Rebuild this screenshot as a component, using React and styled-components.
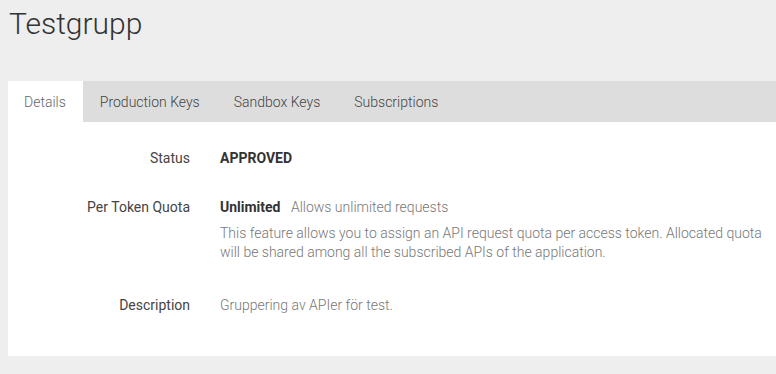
import React, { useState } from 'react'
import styled, { createGlobalStyle } from 'styled-components'

const GlobalStyle = createGlobalStyle`
    body {
        margin: 0;
        background: #eeeeee;
        font-family: Roboto, "Liberation Sans", sans-serif;
    }
`

const Page = styled.div`
    padding: 0 0 18px 8px;
`

const Title = styled.h1`
    margin: 0;
    padding: 6px 0 0 1px;
    height: 75px;
    font-size: 30px;
    font-weight: 300;
    color: #333;
    line-height: 36px;
`

const TabBar = styled.div`
    display: flex;
    height: 41px;
    background: #dddddd;
`

const Tab = styled.div`
    display: flex;
    align-items: center;
    padding: 0 17px;
    font-size: 14px;
    font-weight: 300;
    color: ${p => (p.$active ? '#666' : '#444')};
    background: ${p => (p.$active ? '#fff' : 'transparent')};
    cursor: pointer;

    &:first-child {
        padding-left: 16px;
    }
`

const Panel = styled.div`
    background: #fff;
    padding: 26px 0 12px;
    min-height: 234px;
    box-sizing: border-box;
`

const Row = styled.div`
    display: grid;
    grid-template-columns: 182px 1fr;
    column-gap: 30px;
    margin-bottom: 29px;
    font-size: 14px;
    line-height: 20px;
`

const Label = styled.div`
    text-align: right;
    color: #444;
`

const Value = styled.div`
    color: #777;
    font-weight: 300;
    padding-right: 10px;
`

const Strong = styled.span`
    font-weight: 700;
    color: #333;
    margin-right: 7px;
`

const Note = styled.p`
    margin: 7px 0 4px;
    line-height: 19px;
`

const tabs = ['Details', 'Production Keys', 'Sandbox Keys', 'Subscriptions']

export default function App() {
    const [active, setActive] = useState(0)

    return (
        <Page>
            <GlobalStyle />
            <Title>Testgrupp</Title>
            <TabBar>
                {tabs.map((t, i) => (
                    <Tab key={t} $active={i === active} onClick={() => setActive(i)}>
                        {t}
                    </Tab>
                ))}
            </TabBar>
            <Panel>
                <Row>
                    <Label>Status</Label>
                    <Value><Strong>APPROVED</Strong></Value>
                </Row>
                <Row>
                    <Label>Per Token Quota</Label>
                    <Value>
                        <Strong>Unlimited</Strong> Allows unlimited requests
                        <Note>
                            This feature allows you to assign an API request quota per access token. Allocated quota will be shared among all the subscribed APIs of the application.
                        </Note>
                    </Value>
                </Row>
                <Row>
                    <Label>Description</Label>
                    <Value>Gruppering av APIer för test.</Value>
                </Row>
            </Panel>
        </Page>
    )
}
